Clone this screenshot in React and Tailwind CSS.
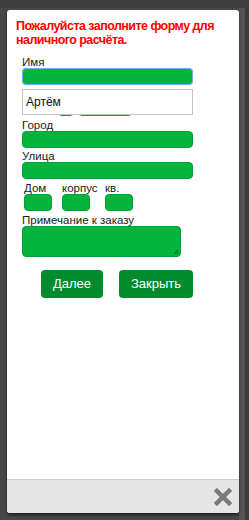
export default function App() {
  const inp = "block h-[17px] rounded-[4px] border border-[#0a9e38] bg-[#05b43c]";
  return (
    <div className="relative h-[520px] w-[249px] overflow-hidden bg-[#474747] font-['Liberation_Sans',Arial,sans-serif]">
      <div className="absolute right-0 top-0 h-full w-[4px] bg-[#3c3c3c]" />
      <div className="absolute right-[4px] top-0 h-full w-[6px] bg-[#555555]" />
      <div className="absolute left-0 top-0 h-[8px] w-full bg-[#3f3f3f]" />
      <div className="relative ml-[7px] mt-[10px] flex h-[503px] w-[232px] flex-col rounded-[3px] bg-white shadow-[0_2px_3px_rgba(0,0,0,0.6)]">
        <div className="relative flex-1">
          <div className="whitespace-nowrap pl-[9px] pt-[9px] text-[12.5px] font-bold leading-[14px] tracking-[-0.55px] text-[#ff0000]">
            Пожалуйста заполните форму для
            <br />
            наличного расчёта.
          </div>
          <div className="ml-[15px] mt-[10px] text-[11.5px] leading-[10px] text-[#1a1a1a]">
            <div>Имя</div>
            <div className="mt-[1px] h-[17px] w-[171px] rounded-[4px] border border-[#7ea9ef] bg-[#05b43c] shadow-[0_0_1px_#9cc0f5]" />
            <div className="mt-[2px] h-[10px]" />
            <div className="mt-[2px] flex">
              <div className="w-[36px]" />
              <div className={inp + " w-[16px]"} />
              <div className={inp + " ml-[4px] w-[54px]"} />
            </div>
            <div className="mt-[4px] h-[10px]">Город</div>
            <div className={inp + " mt-[1px] w-[171px]"} />
            <div className="mt-[3px] h-[10px]">Улица</div>
            <div className={inp + " mt-[1px] w-[171px]"} />
            <div className="mt-[4px] flex pl-[2px]">
              <div className="w-[28px]">
                <div className="h-[10px]">Дом</div>
                <div className={inp + " mt-[1px] h-[16px] w-[28px]"} />
              </div>
              <div className="ml-[10px] w-[28px]">
                <div className="h-[10px] whitespace-nowrap">корпус</div>
                <div className={inp + " mt-[1px] h-[16px] w-[28px]"} />
              </div>
              <div className="ml-[15px] w-[28px]">
                <div className="h-[10px]">кв.</div>
                <div className={inp + " mt-[1px] h-[16px] w-[28px]"} />
              </div>
            </div>
            <div className="mt-[4px] h-[10px]">Примечание к заказу</div>
            <div className="relative mt-[1px] h-[31px] w-[159px] rounded-[4px] border border-[#0a9e38] bg-[#05b43c]">
              <svg className="absolute bottom-[1px] right-[1px]" width="6" height="6" viewBox="0 0 6 6">
                <path d="M5 1 L1 5 M5 3.5 L3.5 5" stroke="#2a2a2a" strokeWidth="0.8" />
              </svg>
            </div>
          </div>
          <div className="ml-[34px] mt-[13px] flex gap-[16px]">
            <div className="flex h-[28px] w-[62px] items-center justify-center rounded-[4px] bg-[#008c2d] text-[13px] text-white">Далее</div>
            <div className="flex h-[28px] w-[74px] items-center justify-center rounded-[4px] bg-[#008c2d] text-[13px] text-white">Закрыть</div>
          </div>
          <div className="absolute left-[15px] top-[79px] h-[26px] w-[171px] border border-[#c4c4c4] bg-white pl-[3px] pt-[6px] text-[12px] leading-[12px] text-[#111]">
            Артём
          </div>
        </div>
        <div className="flex h-[34px] items-center justify-end rounded-b-[3px] border-t border-[#cfcfcf] bg-[#e6e6e6] pr-[7px]">
          <svg width="18" height="18" viewBox="0 0 18 18">
            <path d="M3 3 L15 15 M15 3 L3 15" stroke="#7a7a7a" strokeWidth="4.5" strokeLinecap="square" />
          </svg>
        </div>
      </div>
    </div>
  );
}
